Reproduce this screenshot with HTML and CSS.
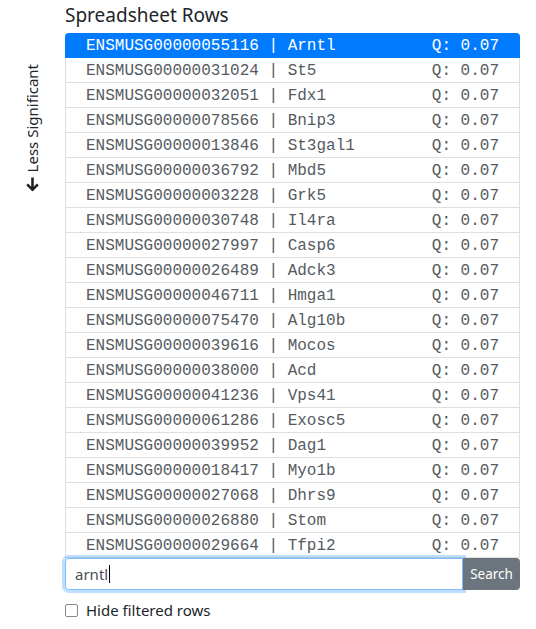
FILE: index.html
```html
<!DOCTYPE html>
<html>
<head>
<meta charset="utf-8">
<link rel="stylesheet" href="styles.css">
</head>
<body>
<div class="page">
  <div class="side">
    <div class="vlabel">
      <svg class="arrow" width="15" height="15" viewBox="0 0 14 14"><path d="M7 1 V12 M2 7.5 L7 12.5 L12 7.5" fill="none" stroke="#222" stroke-width="2.4"/></svg>
      <span>Less Significant</span>
    </div>
  </div>
  <div class="main">
    <h2 class="title">Spreadsheet Rows</h2>
    <div class="list">
      <div class="row active"><span>ENSMUSG00000055116 | Arntl</span><span>Q: 0.07</span></div>
      <div class="row"><span>ENSMUSG00000031024 | St5</span><span>Q: 0.07</span></div>
      <div class="row"><span>ENSMUSG00000032051 | Fdx1</span><span>Q: 0.07</span></div>
      <div class="row"><span>ENSMUSG00000078566 | Bnip3</span><span>Q: 0.07</span></div>
      <div class="row"><span>ENSMUSG00000013846 | St3gal1</span><span>Q: 0.07</span></div>
      <div class="row"><span>ENSMUSG00000036792 | Mbd5</span><span>Q: 0.07</span></div>
      <div class="row"><span>ENSMUSG00000003228 | Grk5</span><span>Q: 0.07</span></div>
      <div class="row"><span>ENSMUSG00000030748 | Il4ra</span><span>Q: 0.07</span></div>
      <div class="row"><span>ENSMUSG00000027997 | Casp6</span><span>Q: 0.07</span></div>
      <div class="row"><span>ENSMUSG00000026489 | Adck3</span><span>Q: 0.07</span></div>
      <div class="row"><span>ENSMUSG00000046711 | Hmga1</span><span>Q: 0.07</span></div>
      <div class="row"><span>ENSMUSG00000075470 | Alg10b</span><span>Q: 0.07</span></div>
      <div class="row"><span>ENSMUSG00000039616 | Mocos</span><span>Q: 0.07</span></div>
      <div class="row"><span>ENSMUSG00000038000 | Acd</span><span>Q: 0.07</span></div>
      <div class="row"><span>ENSMUSG00000041236 | Vps41</span><span>Q: 0.07</span></div>
      <div class="row"><span>ENSMUSG00000061286 | Exosc5</span><span>Q: 0.07</span></div>
      <div class="row"><span>ENSMUSG00000039952 | Dag1</span><span>Q: 0.07</span></div>
      <div class="row"><span>ENSMUSG00000018417 | Myo1b</span><span>Q: 0.07</span></div>
      <div class="row"><span>ENSMUSG00000027068 | Dhrs9</span><span>Q: 0.07</span></div>
      <div class="row"><span>ENSMUSG00000026880 | Stom</span><span>Q: 0.07</span></div>
      <div class="row"><span>ENSMUSG00000029664 | Tfpi2</span><span>Q: 0.07</span></div>
    </div>
    <div class="search">
      <div class="input">arntl<span class="caret"></span></div>
      <div class="btn">Search</div>
    </div>
    <label class="check"><span class="box"></span>Hide filtered rows</label>
  </div>
</div>
</body>
</html>
```
FILE: styles.css
```css
* { box-sizing: border-box; }
body { margin: 0; background: #fff; font-family: "Noto Sans", "Open Sans", sans-serif; color: #212529; }
.page { display: flex; }
.side { width: 65px; padding-top: 64px; display: flex; justify-content: center; align-items: flex-start; }
.vlabel {
  writing-mode: vertical-rl;
  transform: rotate(180deg);
  display: flex;
  align-items: center;
  gap: 4px;
  font-size: 15px;
  color: #212529;
  line-height: 1;
}
.arrow { transform: rotate(180deg); }
.main { width: 455px; }
.title { margin: 3px 0 0; height: 30px; font-size: 19px; font-weight: 400; line-height: 24px; }
.list {
  border: 1px solid #dfdfdf;
  border-top: none;
  border-bottom: none;
  border-radius: 4px 4px 0 0;
}
.row {
  display: flex;
  justify-content: space-between;
  height: 25px;
  padding: 1px 20px 0;
  border-bottom: 1px solid #dfdfdf;
  font-family: "Liberation Mono", monospace;
  font-size: 16px;
  line-height: 24px;
  color: #555b61;
  white-space: pre;
}
.row.active {
  background: #007bff;
  color: #fff;
  border-bottom-color: #007bff;
  margin: 0 -1px;
  padding: 1px 21px 0;
  border-radius: 4px 4px 0 0;
}
.search { display: flex; height: 32px; margin-top: 0; }
.input {
  flex: 1;
  border: 1px solid #80bdff;
  border-radius: 4px 0 0 4px;
  box-shadow: 0 0 0 3px rgba(0,123,255,.25);
  padding: 0 9px;
  font-size: 15px;
  color: #495057;
  display: flex;
  align-items: center;
}
.caret { display: inline-block; width: 1px; height: 18px; background: #000; margin-left: 1px; }
.btn {
  width: 57px;
  background: #6c757d;
  color: #fff;
  font-size: 13.5px;
  border-radius: 0 4px 4px 0;
  display: flex;
  align-items: center;
  justify-content: center;
}
.check { display: flex; align-items: center; gap: 8px; margin-top: 10px; font-size: 15px; color: #212529; }
.box { width: 13px; height: 13px; border: 1px solid #8a8a8a; border-radius: 2px; }
```
